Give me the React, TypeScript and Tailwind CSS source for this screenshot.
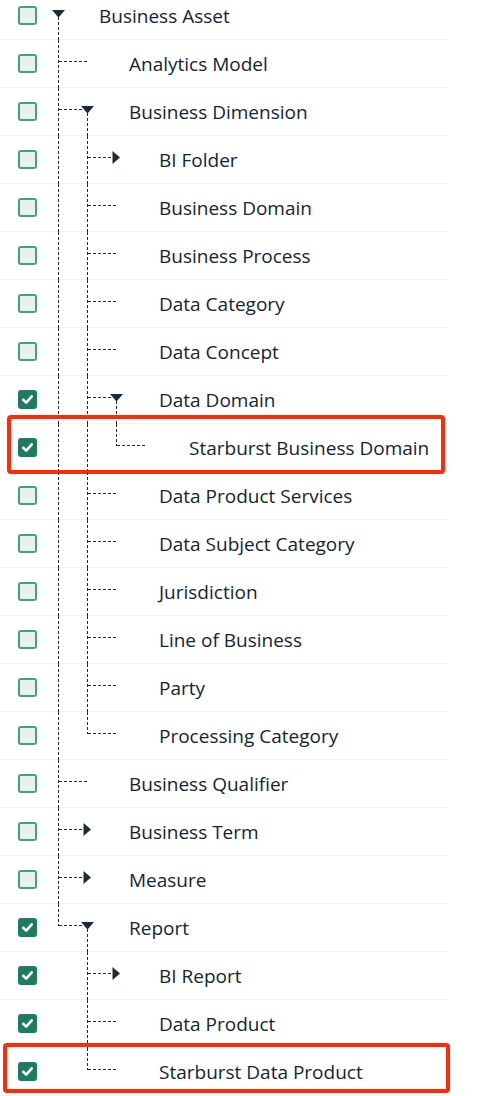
import React from 'react';

type Node = {
  label: string;
  level: number;
  state?: 'open' | 'closed';
  checked?: boolean;
  mark?: 'a' | 'b';
};

const rows: Node[] = [
  { label: 'Business Asset', level: 0, state: 'open' },
  { label: 'Analytics Model', level: 1 },
  { label: 'Business Dimension', level: 1, state: 'open' },
  { label: 'BI Folder', level: 2, state: 'closed' },
  { label: 'Business Domain', level: 2 },
  { label: 'Business Process', level: 2 },
  { label: 'Data Category', level: 2 },
  { label: 'Data Concept', level: 2 },
  { label: 'Data Domain', level: 2, state: 'open', checked: true },
  { label: 'Starburst Business Domain', level: 3, checked: true, mark: 'a' },
  { label: 'Data Product Services', level: 2 },
  { label: 'Data Subject Category', level: 2 },
  { label: 'Jurisdiction', level: 2 },
  { label: 'Line of Business', level: 2 },
  { label: 'Party', level: 2 },
  { label: 'Processing Category', level: 2 },
  { label: 'Business Qualifier', level: 1 },
  { label: 'Business Term', level: 1, state: 'closed' },
  { label: 'Measure', level: 1, state: 'closed' },
  { label: 'Report', level: 1, state: 'open', checked: true },
  { label: 'BI Report', level: 2, state: 'closed', checked: true },
  { label: 'Data Product', level: 2, checked: true },
  { label: 'Starburst Data Product', level: 2, checked: true, mark: 'b' },
];

// x of each level's toggle / children guide line
const GUIDE = [58.5, 87.5, 116.5, 145.5];
const LINE_Y = 21.5;
const INK = '#1c2b36';

const labelIndent: Record<number, string> = {
  0: 'ml-[62px]',
  1: 'ml-[92px]',
  2: 'ml-[122px]',
  3: 'ml-[152px]',
};

// is there another node at `level` below row i before the branch closes
const hasLaterSibling = (i: number, level: number) => {
  for (let j = i + 1; j < rows.length; j++) {
    if (rows[j].level < level) return false;
    if (rows[j].level === level) return true;
  }
  return false;
};

const Connectors = ({ i }: { i: number }) => {
  const node = rows[i];
  const L = node.level;
  const parts: React.ReactNode[] = [];
  const dash = { stroke: INK, strokeWidth: 1, strokeDasharray: '3 2', fill: 'none', shapeRendering: 'crispEdges' as const };

  for (let a = 0; a < L; a++) {
    const x = GUIDE[a];
    if (a < L - 1) {
      if (hasLaterSibling(i, a + 1)) parts.push(<line key={'g' + a} x1={x} y1={0} x2={x} y2={48} {...dash} />);
    } else {
      const full = hasLaterSibling(i, L);
      parts.push(<line key={'g' + a} x1={x} y1={0} x2={x} y2={full ? 48 : LINE_Y} {...dash} />);
    }
  }

  if (L > 0) {
    const x0 = GUIDE[L - 1];
    if (node.state === 'open') {
      parts.push(<line key="h" x1={x0} y1={LINE_Y} x2={GUIDE[L] - 6} y2={LINE_Y} {...dash} />);
    } else if (node.state === 'closed') {
      parts.push(<line key="h" x1={x0} y1={LINE_Y} x2={x0 + 25} y2={LINE_Y} {...dash} />);
      parts.push(
        <polygon key="t" points={`${x0 + 25},${LINE_Y - 6.5} ${x0 + 32.5},${LINE_Y} ${x0 + 25},${LINE_Y + 6.5}`} fill={INK} />
      );
    } else {
      parts.push(<line key="h" x1={x0} y1={LINE_Y} x2={x0 + 30} y2={LINE_Y} {...dash} />);
    }
  }

  if (node.state === 'open') {
    const x = GUIDE[L];
    parts.push(<polygon key="d" points={`${x - 6.5},18 ${x + 6.5},18 ${x},25.5`} fill={INK} />);
    parts.push(<line key="v" x1={x} y1={25} x2={x} y2={48} {...dash} />);
  }

  return (
    <svg className="absolute inset-0 pointer-events-none" width={448} height={48}>
      {parts}
    </svg>
  );
};

const Checkbox = ({ checked }: { checked?: boolean }) =>
  checked ? (
    <div className="ml-[18px] w-[19px] h-[19px] shrink-0 rounded-[3px] bg-[#1e7b62] flex items-center justify-center">
      <svg width="13" height="13" viewBox="0 0 13 13">
        <polyline points="2.2,6.8 5.2,9.6 10.8,3.4" fill="none" stroke="#fff" strokeWidth="2.6" strokeLinecap="round" strokeLinejoin="round" />
      </svg>
    </div>
  ) : (
    <div className="ml-[18px] w-[19px] h-[19px] shrink-0 rounded-[3px] border-2 border-[#46a085] bg-[#e9f1ef]" />
  );

export default function App() {
  return (
    <div className="bg-white min-h-screen overflow-hidden font-['Open_Sans',sans-serif]">
      <div className="-mt-2 w-[448px]">
        {rows.map((node, i) => (
          <div key={node.label} className="relative h-12 flex items-center border-b border-[#f0f2f3]">
            <Connectors i={i} />
            <Checkbox checked={node.checked} />
            <span className={`${labelIndent[node.level]} pt-[2px] text-[19px] leading-none text-[#132533] whitespace-nowrap`}>
              {node.label}
            </span>
            {node.mark === 'a' && (
              <div className="absolute -top-[9px] -bottom-[3px] left-[7px] right-[3px] border-4 border-[#ff2b06] rounded-[4px] pointer-events-none" />
            )}
            {node.mark === 'b' && (
              <div className="absolute -top-[5px] bottom-[2px] left-[3px] -right-[2px] border-4 border-[#ff2b06] rounded-[4px] pointer-events-none" />
            )}
          </div>
        ))}
      </div>
    </div>
  );
}
